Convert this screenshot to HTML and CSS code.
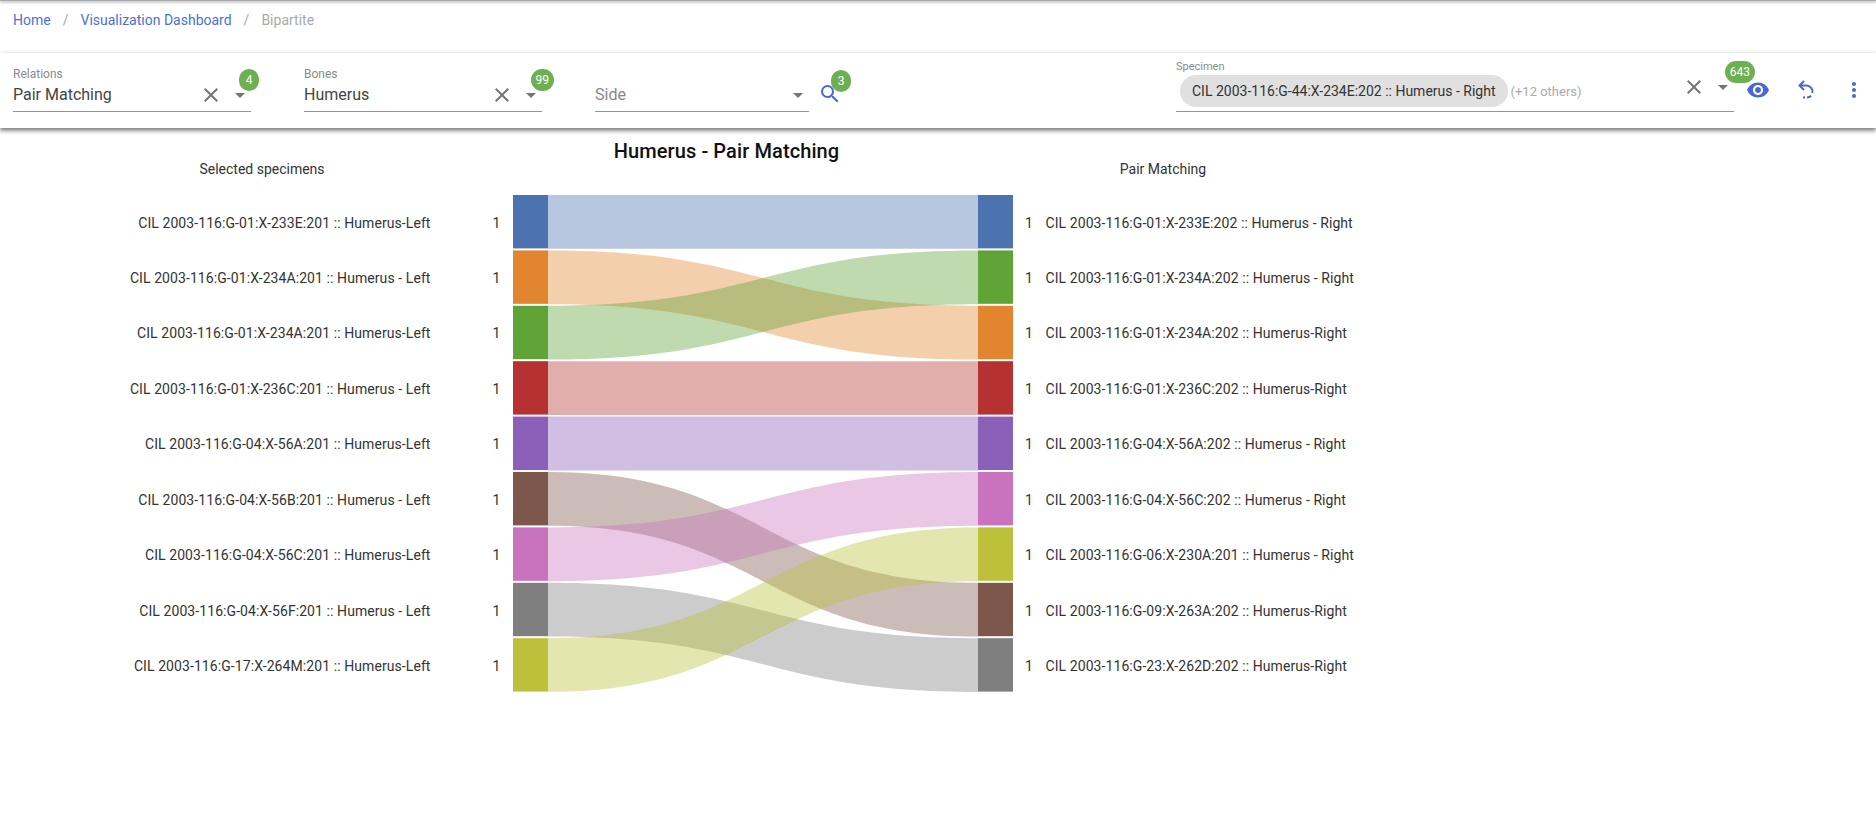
FILE: index.html
```html
<!DOCTYPE html>
<html lang="en">

<head>
    <meta charset="UTF-8">
    <title>Bipartite</title>
    <link rel="stylesheet" href="styles.css">
</head>

<body>
    <div class="top-edge"></div>

    <!-- Breadcrumbs -->
    <nav class="crumbs">
        <a href="#">Home</a>
        <span class="sep">/</span>
        <a href="#">Visualization Dashboard</a>
        <span class="sep">/</span>
        <span class="current">Bipartite</span>
    </nav>

    <!-- Filter bar -->
    <div class="filters">
        <div class="field field-relations">
            <label>Relations</label>
            <div class="value">Pair Matching</div>
            <svg class="clear" viewBox="0 0 24 24"><path d="M19 6.41 17.59 5 12 10.59 6.41 5 5 6.41 10.59 12 5 17.59 6.41 19 12 13.41 17.59 19 19 17.59 13.41 12z"/></svg>
            <span class="arrow"></span>
            <span class="badge">4</span>
        </div>
        <div class="field field-bones">
            <label>Bones</label>
            <div class="value">Humerus</div>
            <svg class="clear" viewBox="0 0 24 24"><path d="M19 6.41 17.59 5 12 10.59 6.41 5 5 6.41 10.59 12 5 17.59 6.41 19 12 13.41 17.59 19 19 17.59 13.41 12z"/></svg>
            <span class="arrow"></span>
            <span class="badge badge-wide">99</span>
        </div>
        <div class="field field-side">
            <div class="value placeholder">Side</div>
            <span class="arrow"></span>
        </div>
        <div class="search-btn">
            <svg class="icon" viewBox="0 0 24 24"><path d="M15.5 14h-.79l-.28-.27A6.47 6.47 0 0 0 16 9.5 6.5 6.5 0 1 0 9.5 16c1.61 0 3.09-.59 4.23-1.57l.27.28v.79l5 4.99L20.49 19l-4.99-5zm-6 0C7.01 14 5 11.99 5 9.5S7.01 5 9.5 5 14 7.01 14 9.5 11.99 14 9.5 14z"/></svg>
            <span class="badge">3</span>
        </div>

        <div class="field field-specimen">
            <label>Specimen</label>
            <div class="chips">
                <span class="chip">CIL 2003-116:G-44:X-234E:202 :: Humerus - Right</span>
                <span class="others">(+12 others)</span>
            </div>
            <svg class="clear" viewBox="0 0 24 24"><path d="M19 6.41 17.59 5 12 10.59 6.41 5 5 6.41 10.59 12 5 17.59 6.41 19 12 13.41 17.59 19 19 17.59 13.41 12z"/></svg>
            <span class="arrow"></span>
            <span class="badge">643</span>
        </div>
        <div class="actions">
            <svg class="icon" viewBox="0 0 24 24"><path d="M12 4.5C7 4.5 2.73 7.61 1 12c1.73 4.39 6 7.5 11 7.5s9.27-3.11 11-7.5c-1.73-4.39-6-7.5-11-7.5zM12 17c-2.76 0-5-2.24-5-5s2.24-5 5-5 5 2.24 5 5-2.24 5-5 5zm0-8c-1.66 0-3 1.34-3 3s1.34 3 3 3 3-1.34 3-3-1.34-3-3-3z"/></svg>
            <svg class="icon icon-line" viewBox="0 0 24 24"><path d="M10 3 5.500 7.500 10 12M5.500 7.500h7a6 6 0 0 1 5.800 7.500"/><path d="M17.200 17.700A6 6 0 0 1 13 19.500M11 19.500H9"/></svg>
            <svg class="icon" viewBox="0 0 24 24"><path d="M12 8c1.100 0 2-.9 2-2s-.9-2-2-2-2 .9-2 2 .9 2 2 2zm0 2c-1.100 0-2 .9-2 2s.9 2 2 2 2-.9 2-2-.9-2-2-2zm0 6c-1.100 0-2 .9-2 2s.9 2 2 2 2-.9 2-2-.9-2-2-2z"/></svg>
        </div>
    </div>

    <!-- Bipartite chart -->
    <svg class="chart" viewBox="0 128 1876 704">
        <text class="title" x="726.500" y="158">Humerus - Pair Matching</text>
        <text class="heading" x="262" y="174">Selected specimens</text>
        <text class="heading" x="1163" y="174">Pair Matching</text>

        <!-- links -->
        <path class="link c-blue" d="M548 195H978V248.800H548Z"/>
        <path class="link c-orange" d="M548 250.400C763 250.400 763 305.800 978 305.800V359.600C763 359.600 763 304.200 548 304.200Z"/>
        <path class="link c-green" d="M548 305.800C763 305.800 763 250.400 978 250.400V304.200C763 304.200 763 359.600 548 359.600Z"/>
        <path class="link c-red" d="M548 361.200H978V415H548Z"/>
        <path class="link c-purple" d="M548 416.600H978V470.400H548Z"/>
        <path class="link c-brown" d="M548 472C763 472 763 582.800 978 582.800V636.600C763 636.600 763 525.800 548 525.800Z"/>
        <path class="link c-pink" d="M548 527.400C763 527.400 763 472 978 472V525.800C763 525.800 763 581.200 548 581.200Z"/>
        <path class="link c-grey" d="M548 582.800C763 582.800 763 638.200 978 638.200V692C763 692 763 636.600 548 636.600Z"/>
        <path class="link c-olive" d="M548 638.200C763 638.200 763 527.400 978 527.400V581.200C763 581.200 763 692 548 692Z"/>

        <!-- left nodes -->
        <rect class="c-blue" x="513" y="195" width="35" height="53.400"/>
        <rect class="c-orange" x="513" y="250.400" width="35" height="53.400"/>
        <rect class="c-green" x="513" y="305.800" width="35" height="53.400"/>
        <rect class="c-red" x="513" y="361.200" width="35" height="53.400"/>
        <rect class="c-purple" x="513" y="416.600" width="35" height="53.400"/>
        <rect class="c-brown" x="513" y="472" width="35" height="53.400"/>
        <rect class="c-pink" x="513" y="527.400" width="35" height="53.400"/>
        <rect class="c-grey" x="513" y="582.800" width="35" height="53.400"/>
        <rect class="c-olive" x="513" y="638.200" width="35" height="53.400"/>

        <!-- right nodes -->
        <rect class="c-blue" x="978" y="195" width="35" height="53.400"/>
        <rect class="c-green" x="978" y="250.400" width="35" height="53.400"/>
        <rect class="c-orange" x="978" y="305.800" width="35" height="53.400"/>
        <rect class="c-red" x="978" y="361.200" width="35" height="53.400"/>
        <rect class="c-purple" x="978" y="416.600" width="35" height="53.400"/>
        <rect class="c-pink" x="978" y="472" width="35" height="53.400"/>
        <rect class="c-olive" x="978" y="527.400" width="35" height="53.400"/>
        <rect class="c-brown" x="978" y="582.800" width="35" height="53.400"/>
        <rect class="c-grey" x="978" y="638.200" width="35" height="53.400"/>

        <!-- left labels -->
        <g class="labels-left">
            <text x="430.500" y="228">CIL 2003-116:G-01:X-233E:201 :: Humerus-Left</text>
            <text x="430.500" y="283">CIL 2003-116:G-01:X-234A:201 :: Humerus - Left</text>
            <text x="430.500" y="338">CIL 2003-116:G-01:X-234A:201 :: Humerus-Left</text>
            <text x="430.500" y="394">CIL 2003-116:G-01:X-236C:201 :: Humerus - Left</text>
            <text x="430.500" y="449">CIL 2003-116:G-04:X-56A:201 :: Humerus-Left</text>
            <text x="430.500" y="505">CIL 2003-116:G-04:X-56B:201 :: Humerus - Left</text>
            <text x="430.500" y="560">CIL 2003-116:G-04:X-56C:201 :: Humerus-Left</text>
            <text x="430.500" y="616">CIL 2003-116:G-04:X-56F:201 :: Humerus - Left</text>
            <text x="430.500" y="671">CIL 2003-116:G-17:X-264M:201 :: Humerus-Left</text>
        </g>
        <g class="labels-left">
            <text x="500.500" y="228">1</text>
            <text x="500.500" y="283">1</text>
            <text x="500.500" y="338">1</text>
            <text x="500.500" y="394">1</text>
            <text x="500.500" y="449">1</text>
            <text x="500.500" y="505">1</text>
            <text x="500.500" y="560">1</text>
            <text x="500.500" y="616">1</text>
            <text x="500.500" y="671">1</text>
        </g>

        <!-- right labels -->
        <g class="labels-right">
            <text x="1025" y="228">1</text>
            <text x="1025" y="283">1</text>
            <text x="1025" y="338">1</text>
            <text x="1025" y="394">1</text>
            <text x="1025" y="449">1</text>
            <text x="1025" y="505">1</text>
            <text x="1025" y="560">1</text>
            <text x="1025" y="616">1</text>
            <text x="1025" y="671">1</text>
        </g>
        <g class="labels-right">
            <text x="1045.500" y="228">CIL 2003-116:G-01:X-233E:202 :: Humerus - Right</text>
            <text x="1045.500" y="283">CIL 2003-116:G-01:X-234A:202 :: Humerus - Right</text>
            <text x="1045.500" y="338">CIL 2003-116:G-01:X-234A:202 :: Humerus-Right</text>
            <text x="1045.500" y="394">CIL 2003-116:G-01:X-236C:202 :: Humerus-Right</text>
            <text x="1045.500" y="449">CIL 2003-116:G-04:X-56A:202 :: Humerus - Right</text>
            <text x="1045.500" y="505">CIL 2003-116:G-04:X-56C:202 :: Humerus - Right</text>
            <text x="1045.500" y="560">CIL 2003-116:G-06:X-230A:201 :: Humerus - Right</text>
            <text x="1045.500" y="616">CIL 2003-116:G-09:X-263A:202 :: Humerus-Right</text>
            <text x="1045.500" y="671">CIL 2003-116:G-23:X-262D:202 :: Humerus-Right</text>
        </g>
    </svg>
</body>

</html>
```

FILE: styles.css
```css
/* General Styles */
:root {
    --primary: #4a67d6;
    --badge: #6cb052;
    --line: #949494;
    --muted: #8a8a8a;
}

html,
body {
    height: 100%;
}

body {
    margin: 0;
    overflow: hidden;
    background-color: #fff;
    font-family: Roboto, sans-serif;
    color: #333;
}

.top-edge {
    height: 1px;
    background-color: #aaa;
    box-shadow: 0 1px 3px rgba(0, 0, 0, 0.6);
}

/* Breadcrumbs */
.crumbs {
    display: flex;
    align-items: center;
    gap: 12px;
    height: 37px;
    padding-left: 13px;
    font-size: 14px;
}

.crumbs a {
    color: #4a72d4;
    text-decoration: none;
}

.crumbs .sep,
.crumbs .current {
    color: #aaa;
}

/* Filter bar */
.filters {
    position: relative;
    display: flex;
    height: 75px;
    margin-top: 15px;
    padding-left: 13px;
    background-color: #fff;
    box-shadow: 0 0 4px rgba(0, 0, 0, 0.15), 0 3px 4px rgba(0, 0, 0, 0.45);
}

.field {
    position: relative;
    box-sizing: border-box;
    height: 59px;
    border-bottom: 1px solid var(--line);
}

.field label {
    position: absolute;
    left: 0;
    top: 14px;
    font-size: 12px;
    color: var(--muted);
}

.field .value {
    position: absolute;
    left: 0;
    top: 32px;
    font-size: 16px;
    line-height: 20px;
    color: #444;
}

.field .placeholder {
    color: #888;
}

.field-relations {
    width: 238px;
    margin-right: 53px;
}

.field-bones {
    width: 238px;
    margin-right: 53px;
}

.field-side {
    width: 214px;
}

.field-specimen {
    width: 558px;
    margin-left: 334px;
}

.field-specimen label {
    top: 7px;
    font-size: 11px;
}

.clear {
    position: absolute;
    right: 28px;
    top: 30px;
    width: 24px;
    height: 24px;
    fill: #757575;
}

.arrow {
    position: absolute;
    right: 6px;
    top: 40px;
    border-style: solid;
    border-width: 5px 5px 0;
    border-color: #757575 transparent transparent;
}

.badge {
    position: absolute;
    right: -8px;
    top: 16px;
    min-width: 20px;
    height: 22px;
    padding: 0 5px;
    box-sizing: border-box;
    border-radius: 11px;
    background-color: var(--badge);
    color: #fff;
    font-size: 12px;
    line-height: 22px;
    text-align: center;
}

.badge-wide {
    right: -12px;
}

.chips {
    position: absolute;
    left: 4px;
    top: 22px;
    display: flex;
    align-items: center;
    gap: 3px;
}

.chip {
    height: 32px;
    padding: 0 12px;
    border-radius: 16px;
    background-color: #e0e0e0;
    font-size: 14px;
    line-height: 32px;
    white-space: nowrap;
}

.others {
    font-size: 13px;
    color: #aaa;
}

.field-specimen .clear {
    right: 28px;
    top: 22px;
}

.field-specimen .arrow {
    top: 32px;
}

.field-specimen .badge {
    right: -21px;
    top: 8px;
}

.icon {
    width: 24px;
    height: 24px;
    fill: var(--primary);
}

.icon-line {
    fill: none;
    stroke: var(--primary);
    stroke-width: 2;
}

.search-btn {
    position: relative;
    width: 24px;
    height: 24px;
    margin-top: 29px;
    margin-left: 9px;
}

.search-btn .badge {
    right: -9px;
    top: -12px;
}

.actions {
    display: flex;
    gap: 24px;
    margin-top: 25px;
    margin-left: 12px;
    height: 24px;
}

/* Chart */
.chart {
    display: block;
    width: 1876px;
    height: 704px;
    font-family: Roboto, sans-serif;
}

.title {
    font-size: 20px;
    font-weight: 500;
    letter-spacing: 0.1px;
    text-anchor: middle;
    fill: #111;
}

.heading {
    font-size: 14px;
    text-anchor: middle;
    fill: #333;
}

.labels-left text,
.labels-right text {
    font-size: 14px;
    letter-spacing: 0.08px;
    fill: #333;
}

.labels-left text {
    text-anchor: end;
}

.link {
    opacity: 0.4;
}

.c-blue { fill: #4c72b0; }
.c-orange { fill: #e1862f; }
.c-green { fill: #60a337; }
.c-red { fill: #b53132; }
.c-purple { fill: #8a60b8; }
.c-brown { fill: #7e574c; }
.c-pink { fill: #c972be; }
.c-grey { fill: #7f7f7f; }
.c-olive { fill: #bcc03a; }
```
